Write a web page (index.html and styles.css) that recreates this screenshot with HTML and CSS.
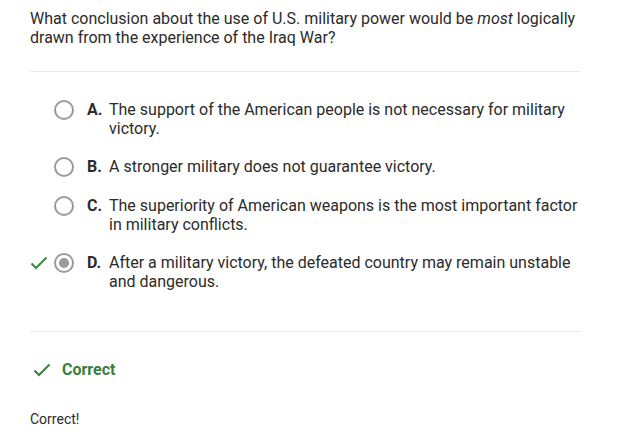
FILE: index.html
```html
<!DOCTYPE html>
<html>
<head>
<meta charset="utf-8">
<link rel="stylesheet" href="styles.css">
</head>
<body>
<div class="page">
  <p class="question">What conclusion about the use of U.S. military power would be <em>most</em> logically drawn from the experience of the Iraq War?</p>
  <hr class="divider">
  <ul class="options">
    <li class="option">
      <span class="mark"></span>
      <span class="radio"></span>
      <span class="letter">A.</span>
      <span class="text">The support of the American people is not necessary for military victory.</span>
    </li>
    <li class="option">
      <span class="mark"></span>
      <span class="radio"></span>
      <span class="letter">B.</span>
      <span class="text">A stronger military does not guarantee victory.</span>
    </li>
    <li class="option">
      <span class="mark"></span>
      <span class="radio"></span>
      <span class="letter">C.</span>
      <span class="text">The superiority of American weapons is the most important factor in military conflicts.</span>
    </li>
    <li class="option">
      <span class="mark"><svg width="18" height="14" viewBox="0 0 18 14"><path d="M1.5 7.5 L6 12 L16.5 1.5" fill="none" stroke="#3d8b40" stroke-width="2"/></svg></span>
      <span class="radio selected"></span>
      <span class="letter">D.</span>
      <span class="text">After a military victory, the defeated country may remain unstable and dangerous.</span>
    </li>
  </ul>
  <hr class="divider lower">
  <div class="result">
    <svg width="18" height="14" viewBox="0 0 18 14"><path d="M1.5 7.5 L6 12 L16.5 1.5" fill="none" stroke="#3d7f3f" stroke-width="2"/></svg>
    <span class="result-label">Correct</span>
  </div>
  <p class="feedback">Correct!</p>
</div>
</body>
</html>
```

FILE: styles.css
```css
html, body {
  margin: 0;
  padding: 0;
  background: #ffffff;
}
body {
  font-family: Roboto, "Liberation Sans", sans-serif;
  color: #2b2b2b;
  font-size: 16px;
}
.page {
  width: 550px;
  padding: 9px 0 0 30px;
}
.question {
  margin: 0;
  line-height: 19px;
}
.question em {
  font-style: italic;
}
.divider {
  border: 0;
  border-top: 1px solid #e6e6e6;
  margin: 24px 0 0 0;
  height: 0;
}
.options {
  list-style: none;
  margin: 0;
  padding: 28px 0 0 0;
}
.option {
  display: flex;
  align-items: flex-start;
  line-height: 19px;
  margin-bottom: 19px;
}
.mark {
  width: 24px;
  display: flex;
  justify-content: flex-start;
  padding-top: 3px;
}
.radio {
  box-sizing: border-box;
  width: 20px;
  height: 20px;
  border: 2px solid #9a9a9a;
  border-radius: 50%;
  flex-shrink: 0;
  display: flex;
  align-items: center;
  justify-content: center;
}
.radio.selected::after {
  content: "";
  width: 10px;
  height: 10px;
  border-radius: 50%;
  background: #9a9a9a;
}
.letter {
  font-weight: 700;
  width: 22px;
  margin-left: 13px;
  flex-shrink: 0;
}
.text {
  flex: 1;
}
.divider.lower {
  margin-top: 40px;
}
.result {
  display: flex;
  align-items: center;
  gap: 11px;
  margin-top: 28px;
  padding-left: 3px;
}
.result-label {
  font-weight: 700;
  color: #3a7d3c;
  font-size: 16px;
}
.feedback {
  margin: 32px 0 0 0;
  font-size: 14px;
}
```
